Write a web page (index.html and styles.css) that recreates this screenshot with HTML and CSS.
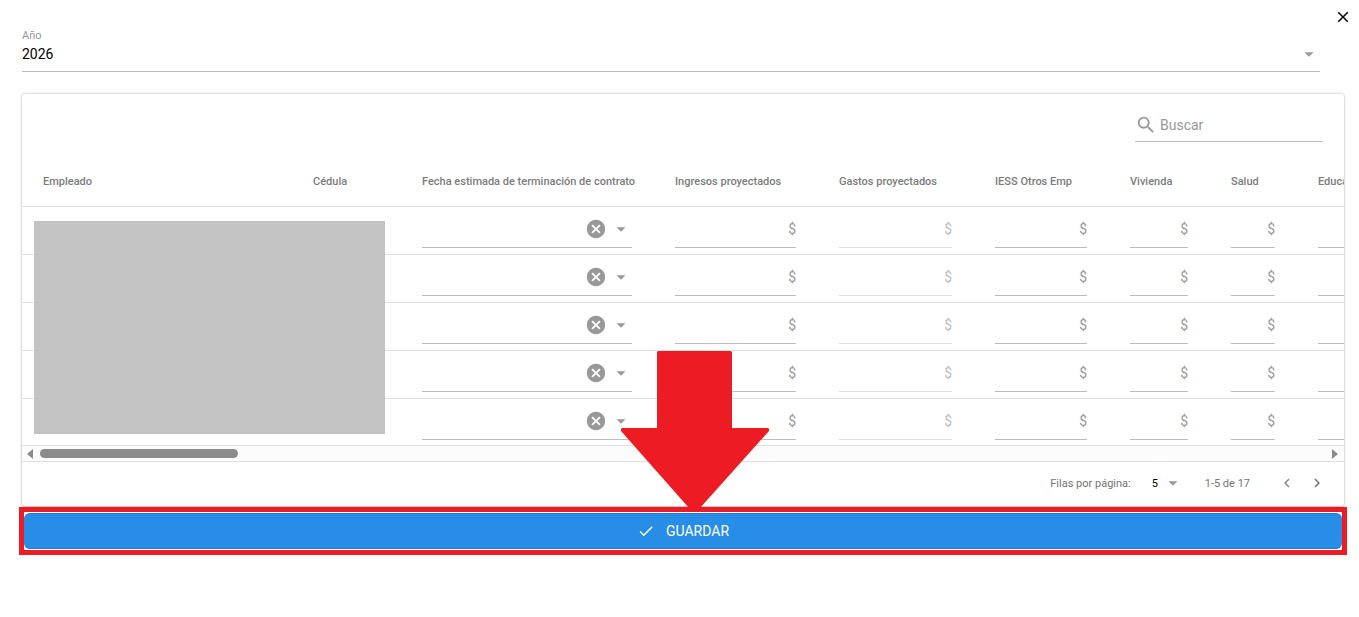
FILE: index.html
```
<!DOCTYPE html>
<html lang="es">
<head>
    <meta charset="utf-8">
    <meta name="viewport" content="width=device-width, initial-scale=1">
    <title>Gastos proyectados</title>
    <link rel="stylesheet" href="styles.css">
</head>
<body>
    <header class="top">
        <button class="close" aria-label="Cerrar">
            <svg width="18" height="18" viewBox="0 0 24 24"><path d="M19 6.4 17.6 5 12 10.6 6.4 5 5 6.4 10.6 12 5 17.6 6.4 19 12 13.4 17.6 19 19 17.6 13.4 12z"/></svg>
        </button>
    </header>

    <div class="year">
        <label for="year">Año</label>
        <div class="year-control">
            <select id="year">
                <option>2026</option>
                <option>2025</option>
            </select>
            <svg class="caret" width="22" height="22" viewBox="0 0 24 24"><path d="M7 10l5 5 5-5z"/></svg>
        </div>
    </div>

    <section class="card">
        <div class="toolbar">
            <div class="search">
                <svg width="22" height="22" viewBox="0 0 24 24"><path d="M15.5 14h-.79l-.28-.27A6.471 6.471 0 0 0 16 9.5 6.5 6.5 0 1 0 9.5 16c1.61 0 3.09-.59 4.23-1.57l.27.28v.79l5 4.99L20.49 19l-4.99-5zm-6 0C7.01 14 5 11.99 5 9.5S7.01 5 9.5 5 14 7.01 14 9.5 11.99 14 9.5 14z"/></svg>
                <input type="text" placeholder="Buscar" aria-label="Buscar">
            </div>
        </div>

        <div class="table-area">
            <div class="table-wrap">
                <table>
                    <colgroup>
                        <col class="w-name">
                        <col class="w-id">
                        <col class="w-date">
                        <col class="w-income">
                        <col class="w-spent">
                        <col class="w-iess">
                        <col class="w-home">
                        <col class="w-health">
                        <col class="w-school">
                    </colgroup>
                    <thead>
                        <tr>
                            <th>Empleado</th>
                            <th>Cédula</th>
                            <th>Fecha estimada de terminación de contrato</th>
                            <th>Ingresos proyectados</th>
                            <th>Gastos proyectados</th>
                            <th>IESS Otros Emp</th>
                            <th>Vivienda</th>
                            <th>Salud</th>
                            <th>Educación</th>
                        </tr>
                    </thead>
                    <tbody id="rows"></tbody>
                </table>
            </div>
            <div class="redacted"></div>
        </div>

        <div class="scrollbar">
            <span class="arrow-left"></span>
            <div class="track"><div class="thumb"></div></div>
            <span class="arrow-right"></span>
        </div>

        <footer class="pager">
            <label for="per-page">Filas por página:</label>
            <div class="per-page">
                <select id="per-page">
                    <option>5</option>
                    <option>10</option>
                </select>
                <svg class="caret" width="22" height="22" viewBox="0 0 24 24"><path d="M7 10l5 5 5-5z"/></svg>
            </div>
            <span class="range">1-5 de 17</span>
            <button class="page-btn" aria-label="Anterior" disabled>
                <svg width="18" height="18" viewBox="0 0 24 24"><path d="M15.41 7.41 14 6l-6 6 6 6 1.41-1.41L10.83 12z"/></svg>
            </button>
            <button class="page-btn" aria-label="Siguiente">
                <svg width="18" height="18" viewBox="0 0 24 24"><path d="M10 6 8.59 7.41 13.17 12l-4.58 4.59L10 18l6-6z"/></svg>
            </button>
        </footer>
    </section>

    <div class="save-box">
        <button class="save">
            <svg width="18" height="18" viewBox="0 0 24 24"><path d="M9 16.17 4.83 12l-1.42 1.41L9 19 21 7l-1.41-1.41z"/></svg>
            <span>GUARDAR</span>
        </button>
        <svg class="pointer" width="148" height="160" viewBox="0 0 148 160"><path d="M37 0h73l1 1v76h36l1 1v2L79 157l-3 3h-5l-3-3L0 80v-2l1-1h35V1z"/></svg>
    </div>

    <script>
        var names = ["Ingresos proyectados", "Gastos proyectados", "IESS Otros Emp", "Vivienda", "Salud", "Educación"];

        function moneyCell(name) {
            var off = name == "Gastos proyectados" ? " disabled" : "";
            return '<td><div class="field' + off + '"><input type="text" aria-label="' + name + '"' + off + '><span>$</span></div></td>';
        }

        var dateCell = '<td><div class="field date">' +
            '<input type="text" aria-label="Fecha estimada de terminación de contrato">' +
            '<button aria-label="Borrar"><svg width="22" height="22" viewBox="0 0 24 24"><path d="M12 2C6.47 2 2 6.47 2 12s4.47 10 10 10 10-4.47 10-10S17.53 2 12 2zm5 13.59L15.59 17 12 13.41 8.41 17 7 15.59 10.59 12 7 8.41 8.41 7 12 10.59 15.59 7 17 8.41 13.41 12z"/></svg></button>' +
            '<button aria-label="Elegir fecha"><svg width="22" height="22" viewBox="0 0 24 24"><path d="M7 10l5 5 5-5z"/></svg></button>' +
            '</div></td>';

        var html = "";
        for (var i = 0; i < 5; i++) {
            html += "<tr><td></td><td></td>" + dateCell + names.map(moneyCell).join("") + "</tr>";
        }
        document.getElementById("rows").innerHTML = html;
    </script>
</body>
</html>
```
FILE: styles.css
```
* {
    box-sizing: border-box;
}
body {
    margin: 0;
    padding: 0 15px 0 22px;
    background: #fff;
    color: #000;
    font-family: Roboto, "Liberation Sans", sans-serif;
    font-size: 14px;
}
button,
input,
select {
    margin: 0;
    padding: 0;
    border: 0;
    background: none;
    font: inherit;
    color: inherit;
    outline: none;
    appearance: none;
}
svg {
    display: block;
    flex: none;
    fill: currentColor;
}

.top {
    display: flex;
    justify-content: flex-end;
    height: 28px;
    padding-top: 8px;
    margin-right: -8px;
}
.close {
    height: 18px;
}

/* year selector */
.year {
    display: flex;
    flex-direction: column;
    height: 44px;
    margin-right: 24px;
    border-bottom: 1px solid #bdbdbd;
}
.year label {
    color: #999;
    font-size: 11px;
    line-height: 16px;
}
.year-control {
    display: flex;
    align-items: center;
    height: 20px;
}
.year select {
    flex: 1;
    height: 20px;
}
.caret {
    color: #999;
    pointer-events: none;
}

/* table card */
.card {
    margin-top: 22px;
    border-radius: 3px;
    background: #fff;
    box-shadow: 0 0 3px rgba(0, 0, 0, .32), 0 1px 1px rgba(0, 0, 0, .14);
}
.toolbar {
    display: flex;
    justify-content: flex-end;
    padding: 14px 21px 14px;
}
.search {
    display: flex;
    align-items: center;
    gap: 3px;
    width: 188px;
    height: 34px;
    border-bottom: 1px solid #bdbdbd;
    color: #999;
}
.search input {
    flex: 1;
    min-width: 0;
    height: 34px;
}
.search input::placeholder {
    color: #999;
    opacity: 1;
}

.table-area {
    position: relative;
}
.table-wrap {
    overflow: hidden;
}
table {
    width: 1475px;
    min-width: 100%;
    table-layout: fixed;
    border-collapse: separate;
    border-spacing: 0;
}
.w-name { width: 270px; }
.w-id { width: 109px; }
.w-date { width: 253px; }
.w-income { width: 164px; }
.w-spent { width: 156px; }
.w-iess { width: 135px; }
.w-home { width: 101px; }
.w-health { width: 87px; }
th {
    height: 51px;
    padding: 0 21px;
    border-bottom: 1px solid #e0e0e0;
    color: #7c7c7c;
    font-size: 11px;
    font-weight: 500;
    text-align: left;
    white-space: nowrap;
}
td {
    height: 48px;
    padding: 4px 22px 6px 21px;
    border-bottom: 1px solid #e0e0e0;
    vertical-align: top;
}
tbody tr:last-child td {
    height: 46px;
    padding-bottom: 5px;
    border-bottom: 0;
}
.field {
    display: flex;
    align-items: center;
    height: 37px;
    border-bottom: 1px solid #bdbdbd;
    color: #999;
}
.field input {
    flex: 1;
    width: 0;
    min-width: 0;
    height: 36px;
    color: #000;
}
.field.disabled {
    border-color: #e0e0e0;
    color: #bdbdbd;
}
.field.date {
    gap: 3px;
}
.redacted {
    position: absolute;
    top: 65px;
    left: 12px;
    width: 351px;
    height: 213px;
    background: #c3c3c3;
}

.scrollbar {
    display: flex;
    align-items: center;
    gap: 7px;
    height: 17px;
    padding: 0 6px 0 5px;
    border: solid #e0e0e0;
    border-width: 1px 0;
    background: #fcfcfc;
}
.track {
    flex: 1;
}
.thumb {
    width: 198px;
    height: 9px;
    border-radius: 5px;
    background: #8b8b8b;
}
.arrow-left,
.arrow-right {
    border: solid transparent;
    border-width: 5px 0;
}
.arrow-left {
    border-right: 6px solid #8b8b8b;
}
.arrow-right {
    border-left: 6px solid #8b8b8b;
}

.pager {
    display: flex;
    align-items: center;
    justify-content: flex-end;
    height: 44px;
    padding: 0 18px 2px 0;
    color: #757575;
    font-size: 11px;
}
.per-page {
    display: flex;
    align-items: center;
    margin: 0 21px;
    color: #000;
}
.per-page select {
    width: 10px;
}
.range {
    margin-right: 28px;
}
.page-btn + .page-btn {
    margin-left: 12px;
}
.page-btn:disabled {
    color: #8b8b8b;
}

/* save button with its highlight */
.save-box {
    position: relative;
    margin: 1px -3px 0;
    padding: 1px 0;
    border: 5px solid #ed1c24;
}
.save {
    display: flex;
    align-items: center;
    justify-content: center;
    gap: 11px;
    width: 100%;
    height: 36px;
    border: solid #1580e0;
    border-width: 1px 0;
    border-radius: 6px;
    background: #278de7;
    color: #fff;
}
.pointer {
    position: absolute;
    bottom: 39px;
    left: 50%;
    margin-left: -62px;
    color: #ed1c24;
    pointer-events: none;
}
```
